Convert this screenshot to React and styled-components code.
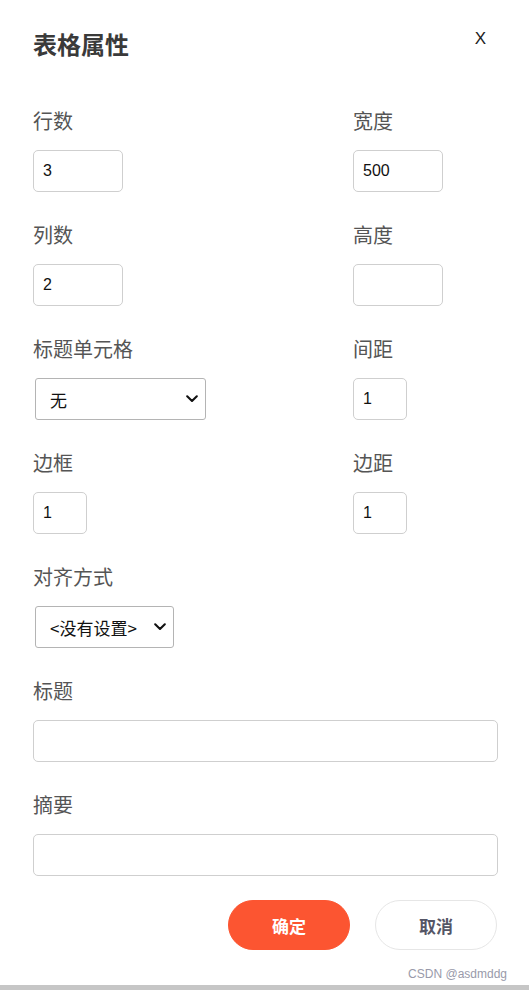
import React from "react";
import styled, { createGlobalStyle } from "styled-components";

const Global = createGlobalStyle`
  html, body { margin: 0; padding: 0; background: #fff; }
  body { font-family: "Noto Sans CJK SC", "Liberation Sans", sans-serif; }
  * { box-sizing: border-box; }
`;

const Page = styled.div`
  width: 529px;
  height: 990px;
  display: flex;
  flex-direction: column;
  background: #fff;
`;

const Dialog = styled.div`
  flex: 1;
  display: flex;
  flex-direction: column;
  padding: 28px 32px 0 33px;
`;

const Header = styled.div`
  display: flex;
  justify-content: space-between;
  align-items: flex-start;
  padding-right: 11px;
  margin-bottom: 47px;
`;

const Title = styled.h2`
  margin: 0;
  font-size: 24px;
  line-height: 32px;
  font-weight: 700;
  color: #3a3a3a;
`;

const Close = styled.span`
  font-family: "Liberation Sans", Arial, sans-serif;
  font-size: 17px;
  line-height: 20px;
  margin-top: 1px;
  color: #222;
  cursor: pointer;
`;

const Grid = styled.div`
  display: grid;
  grid-template-columns: 320px 1fr;
  row-gap: 29px;
`;

const Field = styled.div`
  display: flex;
  flex-direction: column;
  align-items: flex-start;
  grid-column: ${(p) => (p.$full ? "1 / -1" : "auto")};
`;

const Label = styled.label`
  font-size: 20px;
  line-height: 28px;
  color: #555;
  margin-bottom: 15px;
`;

const Input = styled.input`
  width: ${(p) => p.$w};
  height: 42px;
  border: 1px solid #cfcfcf;
  border-radius: 5px;
  padding: 0 9px;
  font-family: "Liberation Sans", Arial, sans-serif;
  font-size: 16px;
  color: #111;
  outline: none;
  background: #fff;
`;

const SelectWrap = styled.div`
  position: relative;
  margin-left: 2px;
  width: ${(p) => p.$w};
  height: 42px;
`;

const Select = styled.select`
  appearance: none;
  -webkit-appearance: none;
  width: 100%;
  height: 42px;
  border: 1px solid #b4b4b4;
  border-radius: 3px;
  padding: 0 26px 0 14px;
  font-family: "Noto Sans CJK SC", "Liberation Sans", sans-serif;
  font-size: 17px;
  color: #111;
  background: #fff;
  outline: none;
`;

const Chevron = styled.svg`
  position: absolute;
  right: 8px;
  top: 17px;
  width: 12px;
  height: 8px;
  pointer-events: none;
`;

const Actions = styled.div`
  display: flex;
  justify-content: flex-end;
  gap: 25px;
  margin-top: 24px;
`;

const Button = styled.button`
  width: 122px;
  height: 50px;
  border-radius: 25px;
  font-family: "Noto Sans CJK SC", sans-serif;
  font-size: 17px;
  font-weight: 700;
  cursor: pointer;
  border: 1px solid ${(p) => (p.$primary ? "#fc5531" : "#e6e6e6")};
  background: ${(p) => (p.$primary ? "#fc5531" : "#fff")};
  color: ${(p) => (p.$primary ? "#fff" : "#555666")};
`;

const Watermark = styled.div`
  align-self: flex-end;
  margin-top: 17px;
  margin-right: -10px;
  font-family: "Liberation Sans", Arial, sans-serif;
  font-size: 12px;
  line-height: 14px;
  color: #999aaa;
`;

const BottomBar = styled.div`
  height: 5px;
  background: #c6c6c6;
`;

function Dropdown({ width, children }) {
  return (
    <SelectWrap $w={width}>
      <Select defaultValue="none">{children}</Select>
      <Chevron viewBox="0 0 12 8">
        <path d="M1.2 1.3 L6 6 L10.8 1.3" fill="none" stroke="#111" strokeWidth="2.1" strokeLinecap="round" strokeLinejoin="round" />
      </Chevron>
    </SelectWrap>
  );
}

export default function App() {
  return (
    <>
      <Global />
      <Page>
        <Dialog>
          <Header>
            <Title>表格属性</Title>
            <Close>X</Close>
          </Header>
          <Grid>
            <Field>
              <Label>行数</Label>
              <Input $w="90px" defaultValue="3" />
            </Field>
            <Field>
              <Label>宽度</Label>
              <Input $w="90px" defaultValue="500" />
            </Field>
            <Field>
              <Label>列数</Label>
              <Input $w="90px" defaultValue="2" />
            </Field>
            <Field>
              <Label>高度</Label>
              <Input $w="90px" defaultValue="" />
            </Field>
            <Field>
              <Label>标题单元格</Label>
              <Dropdown width="171px">
                <option value="none">无</option>
                <option value="row">第一行</option>
              </Dropdown>
            </Field>
            <Field>
              <Label>间距</Label>
              <Input $w="54px" defaultValue="1" />
            </Field>
            <Field>
              <Label>边框</Label>
              <Input $w="54px" defaultValue="1" />
            </Field>
            <Field>
              <Label>边距</Label>
              <Input $w="54px" defaultValue="1" />
            </Field>
            <Field $full>
              <Label>对齐方式</Label>
              <Dropdown width="139px">
                <option value="none">&lt;没有设置&gt;</option>
                <option value="left">左对齐</option>
              </Dropdown>
            </Field>
            <Field $full>
              <Label>标题</Label>
              <Input $w="465px" defaultValue="" />
            </Field>
            <Field $full>
              <Label>摘要</Label>
              <Input $w="465px" defaultValue="" />
            </Field>
          </Grid>
          <Actions>
            <Button $primary>确定</Button>
            <Button>取消</Button>
          </Actions>
          <Watermark>CSDN @asdmddg</Watermark>
        </Dialog>
        <BottomBar />
      </Page>
    </>
  );
}
